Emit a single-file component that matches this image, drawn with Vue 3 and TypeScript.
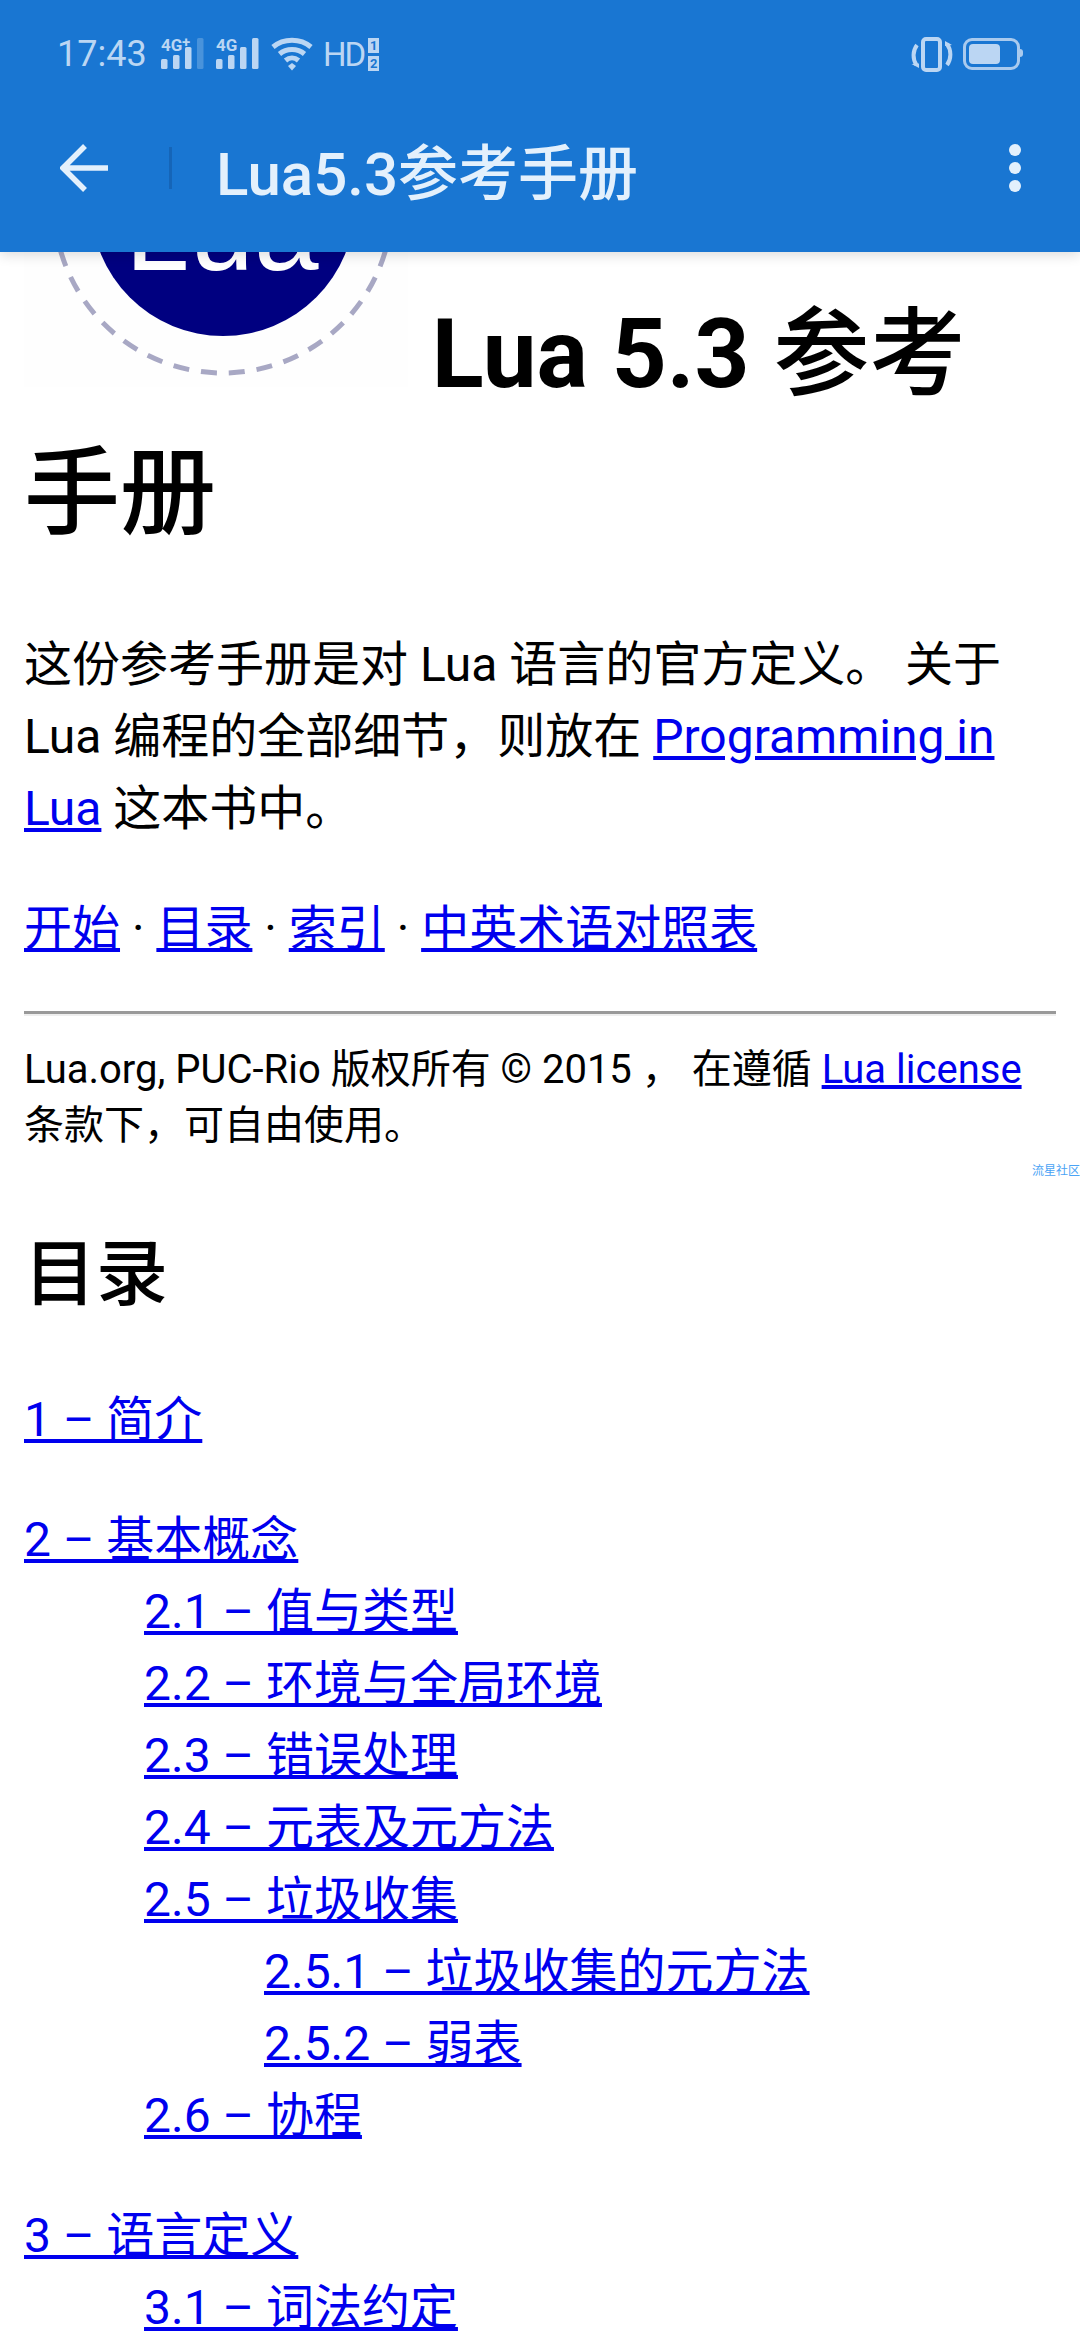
<script setup lang="ts">
interface TocItem {
  label: string
  children?: TocItem[]
}

const toc: TocItem[] = [
  { label: '1 – 简介' },
  {
    label: '2 – 基本概念',
    children: [
      { label: '2.1 – 值与类型' },
      { label: '2.2 – 环境与全局环境' },
      { label: '2.3 – 错误处理' },
      { label: '2.4 – 元表及元方法' },
      {
        label: '2.5 – 垃圾收集',
        children: [
          { label: '2.5.1 – 垃圾收集的元方法' },
          { label: '2.5.2 – 弱表' },
        ],
      },
      { label: '2.6 – 协程' },
    ],
  },
  {
    label: '3 – 语言定义',
    children: [
      { label: '3.1 – 词法约定' },
    ],
  },
]
</script>

<template>
  <div class="page">
    <header class="appbar">
      <div class="status">
        <span class="status__time">17:43</span>
        <svg class="sig" width="43" height="32" viewBox="0 0 43 32">
          <text x="0" y="13" class="sig__text">4G</text>
          <text x="21" y="9" class="sig__plus">+</text>
          <rect x="0" y="21" width="6.500" height="10" rx="1.500" />
          <rect x="12" y="17" width="6.500" height="14" rx="1.500" />
          <rect x="24" y="9" width="6.500" height="22" rx="1.500" />
          <rect x="36" y="0" width="6.500" height="31" rx="1.500" opacity=".3" />
        </svg>
        <svg class="sig" width="43" height="32" viewBox="0 0 43 32">
          <text x="0" y="13" class="sig__text">4G</text>
          <rect x="0" y="21" width="6.500" height="10" rx="1.500" />
          <rect x="12" y="17" width="6.500" height="14" rx="1.500" />
          <rect x="24" y="9" width="6.500" height="22" rx="1.500" />
          <rect x="36" y="0" width="6.500" height="31" rx="1.500" />
        </svg>
        <svg class="wifi" width="42" height="34" viewBox="0 0 42 34">
          <path d="M2 10C12.500 1 29.500 1 40 10" />
          <path d="M8.500 17C15.500 11 26.500 11 33.500 17" />
          <path d="M14.500 23.500C18.500 20 23.500 20 27.500 23.500" />
          <path class="wifi__dot" d="M17 29 21 26 25 29 21 33.500Z" />
        </svg>
        <span class="status__hd">HD</span>
        <span class="sim">
          <span class="sim__n">1</span>
          <span class="sim__n">2</span>
        </span>
        <span class="status__fill"></span>
        <svg class="rot" width="44" height="36" viewBox="0 0 44 36">
          <rect x="13" y="3" width="17" height="31" rx="3" />
          <path d="M7 9C2.500 15 2.500 23 6.500 29" />
          <path d="M37 8C41.500 14 41.500 23 37 29" />
          <path class="rot__head" d="M1.500 28 9 27.500 9 32Z" />
          <path class="rot__head" d="M42 9 35 10 35 5Z" />
        </svg>
        <span class="batt">
          <span class="batt__level"></span>
        </span>
      </div>
      <div class="toolbar">
        <svg class="back" width="48" height="48" viewBox="0 0 48 48">
          <path d="M48 24H3M25 2 3 24 25 46" />
        </svg>
        <span class="toolbar__sep"></span>
        <span class="toolbar__title">Lua5.3参考手册</span>
        <span class="dots">
          <i></i><i></i><i></i>
        </span>
      </div>
    </header>

    <main class="doc">
      <h1 class="doc__title">
        <svg class="logo" width="384" height="384" viewBox="0 0 384 384">
          <rect width="384" height="384" fill="#fefefe" />
          <circle cx="199" cy="201" r="132" fill="#000080" />
          <circle
            cx="199"
            cy="201"
            r="169"
            fill="none"
            stroke="#a8a8c4"
            stroke-width="5"
            stroke-dasharray="16 11.950"
            stroke-dashoffset="8"
          />
          <text x="101" y="267" class="logo__text">Lua</text>
        </svg>
        Lua 5.3 <span class="cjk">参考手册</span>
      </h1>

      <p class="doc__p">
        这份参考手册是对 Lua 语言的官方定义。 关于 Lua 编程的全部细节，则放在
        <a href="#">Programming in Lua</a> 这本书中。
      </p>

      <p class="doc__p doc__p--nav">
        <a href="#">开始</a> · <a href="#">目录</a> · <a href="#">索引</a> ·
        <a href="#">中英术语对照表</a>
      </p>

      <hr class="doc__rule" />

      <small class="doc__legal">
        Lua.org, PUC-Rio 版权所有 © 2015 ， 在遵循 <a href="#">Lua license</a>
        条款下，可自由使用。
      </small>
      <div class="doc__credit">流星社区</div>

      <h2 class="doc__h2"><span class="cjk">目录</span></h2>

      <ul class="toc">
        <li v-for="item in toc" :key="item.label" class="toc__top">
          <a href="#">{{ item.label }}</a>
          <ul v-if="item.children" class="toc__sub">
            <li v-for="sub in item.children" :key="sub.label">
              <a href="#">{{ sub.label }}</a>
              <ul v-if="sub.children" class="toc__sub">
                <li v-for="leaf in sub.children" :key="leaf.label">
                  <a href="#">{{ leaf.label }}</a>
                </li>
              </ul>
            </li>
          </ul>
        </li>
      </ul>
    </main>
  </div>
</template>

<style>
html,
body {
  margin: 0;
  height: 2340px;
  overflow: hidden;
  background: #fff;
}
</style>

<style scoped>
.page {
  width: 1080px;
  height: 2340px;
  overflow: hidden;
  font-family: Roboto, "Noto Sans CJK SC", sans-serif;
  color: #000;
  background: #fff;
  display: flex;
  flex-direction: column;
}
.appbar {
  height: 252px;
  flex-shrink: 0;
  background: #1976d2;
  box-shadow: 0 3px 12px rgba(0, 0, 0, 0.14);
  position: relative;
  z-index: 2;
  display: flex;
  flex-direction: column;
}
.status {
  height: 108px;
  box-sizing: border-box;
  padding: 0 57px 0 57px;
  display: flex;
  align-items: center;
  color: #bbd6f3;
}
.status__time {
  font-size: 36px;
  width: 104px;
}
.sig {
  fill: #bbd6f3;
  margin-right: 12px;
  overflow: visible;
}
.sig__text {
  font-family: Roboto, sans-serif;
  font-size: 17px;
  font-weight: 700;
}
.sig__plus {
  font-family: Roboto, sans-serif;
  font-size: 15px;
  font-weight: 700;
}
.wifi {
  fill: none;
  stroke: #bbd6f3;
  stroke-width: 5px;
  margin-right: 10px;
}
.wifi__dot {
  fill: #bbd6f3;
  stroke: none;
}
.status__hd {
  font-size: 33px;
  letter-spacing: -2px;
  margin-right: 4px;
}
.sim {
  display: flex;
  flex-direction: column;
  gap: 3px;
}
.sim__n {
  width: 11px;
  height: 15px;
  background: #bbd6f3;
  color: #1976d2;
  font-size: 13px;
  font-weight: 700;
  line-height: 15px;
  text-align: center;
}
.status__fill {
  flex: 1;
}
.rot {
  fill: none;
  stroke: #bbd6f3;
  stroke-width: 4px;
  margin-right: 9px;
}
.rot__head {
  fill: #bbd6f3;
  stroke: none;
}
.batt {
  width: 57px;
  height: 32px;
  box-sizing: border-box;
  border: 3px solid #a9caee;
  border-radius: 9px;
  padding: 3px;
  position: relative;
  display: flex;
  margin-right: 3px;
}
.batt::after {
  content: "";
  position: absolute;
  right: -6px;
  top: 8px;
  width: 3px;
  height: 8px;
  border-radius: 0 3px 3px 0;
  background: #a9caee;
}
.batt__level {
  width: 31px;
  background: #bbd6f3;
  border-radius: 4px;
}
.toolbar {
  flex: 1;
  padding: 0 0 24px 60px;
  display: flex;
  align-items: center;
  color: #e3f0fc;
}
.back {
  fill: none;
  stroke: #e3f0fc;
  stroke-width: 5.500px;
  margin-right: 61px;
}
.toolbar__sep {
  width: 3px;
  height: 42px;
  background: #1565b8;
  margin-right: 44px;
}
.toolbar__title {
  font-size: 60px;
  font-weight: 500;
  flex: 1;
}
.dots {
  display: flex;
  flex-direction: column;
  gap: 6px;
  margin-right: 59px;
}
.dots i {
  display: block;
  width: 12px;
  height: 12px;
  border-radius: 50%;
  background: #e3f0fc;
}
.doc {
  padding: 0 24px;
  flex: 1;
  min-height: 0;
  font-size: 48px;
  line-height: 72px;
}
.doc a {
  color: #00e;
  text-decoration: underline;
}
.doc__title {
  margin: -249px 0 0;
  font-size: 96px;
  font-weight: 700;
  line-height: 139px;
}
.cjk {
  font-weight: 500;
}
.logo {
  vertical-align: baseline;
}
.logo__text {
  font-family: "Liberation Sans", sans-serif;
  font-size: 116px;
  font-weight: 400;
  fill: #fff;
}
.doc__p {
  margin: 66px 0 48px;
}
.doc__p--nav {
  margin: 46px 0 46px;
}
.doc__rule {
  margin: 0;
  height: 3px;
  border: none;
  background: #999;
  box-shadow: 0 2px 0 #eee;
}
.doc__legal {
  display: block;
  margin-top: 28px;
  font-size: 40px;
  line-height: 56px;
}
.doc__credit {
  text-align: right;
  margin-top: 8px;
  margin-right: -24px;
  font-size: 12px;
  line-height: 18px;
  color: #4aa3f5;
}
.doc__h2 {
  margin: 43px 0 0;
  font-size: 72px;
  font-weight: 700;
  line-height: 104px;
}
.toc,
.toc__sub {
  list-style: none;
  margin: 0;
  padding: 0;
}
.toc {
  margin-top: 57px;
}
.toc__sub {
  padding-left: 120px;
}
.toc__top {
  margin-bottom: 48px;
}
</style>
